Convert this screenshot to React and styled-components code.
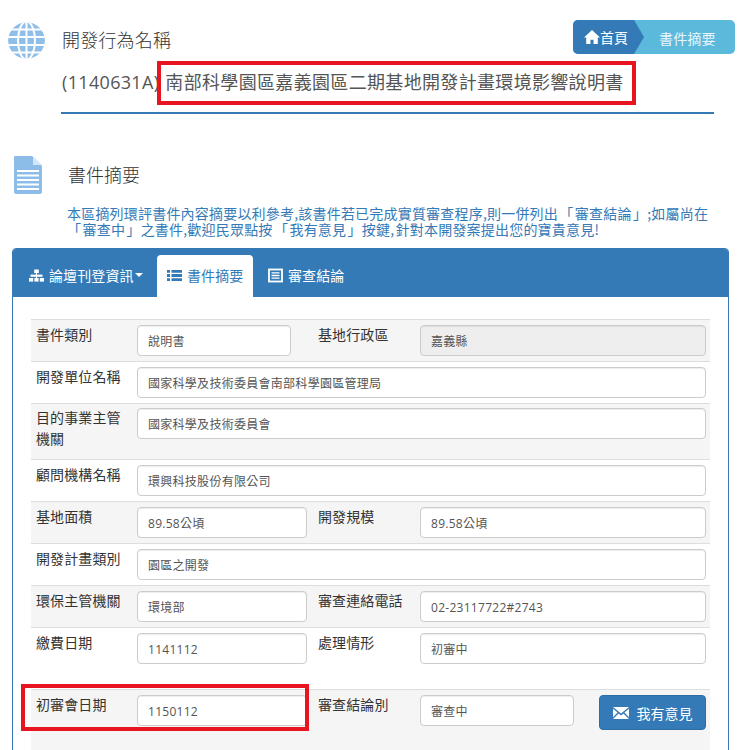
import React from "react";
import styled, { createGlobalStyle } from "styled-components";

const Global = createGlobalStyle`
  html, body { margin: 0; padding: 0; height: 750px; overflow: hidden; background: #fff; }
  body { font-family: "Open Sans", "Noto Sans CJK TC", sans-serif; color: #333; }
`;
const Page = styled.div`
  position: relative;
  width: 740px;
  height: 750px;
  overflow: hidden;
`;
const Header = styled.header`
  display: flex;
  padding: 20px 5px 0 8px;
  height: 134px;
  box-sizing: border-box;
`;
const HeaderIcon = styled.svg`
  width: 37px;
  height: 37px;
  margin-top: 2px;
  flex: none;
`;
const TitleBlock = styled.div`
  margin-left: 16px;
  padding-left: 1px;
  width: 652px;
  height: 92px;
  border-bottom: 2px solid #337ab7;
  flex: none;
`;
const TitleLine = styled.div`
  font-size: 18px;
  line-height: 24px;
  letter-spacing: 0.2px;
  padding-top: 7px;
  color: #333;
  font-family: "Noto Sans CJK TC", sans-serif;
  font-weight: 300;
`;
const SubTitle = styled.div`
  font-size: 18px;
  line-height: 24px;
  margin-top: 19px;
  color: #555;
  letter-spacing: 0.33px;
  white-space: nowrap;
  font-family: "Open Sans", "Noto Sans CJK TC", sans-serif;
`;
const SubTitleName = styled.span`
  margin-left: 1px;
`;
const Crumbs = styled.nav`
  position: absolute;
  left: 573px;
  top: 20px;
  width: 162px;
  height: 34px;
  display: flex;
  border-radius: 5px;
  overflow: hidden;
  background: #5bb9dc;
  color: #fff;
  font-size: 14px;
  line-height: 36px;
  font-family: "Noto Sans CJK TC", sans-serif;
`;
const CrumbHome = styled.div`
  position: relative;
  width: 61px;
  background: #337ab7;
  display: flex;
  align-items: center;
  padding-left: 11px;
  box-sizing: border-box;
  &::after {
    content: "";
    position: absolute;
    left: 61px;
    top: 0;
    border-left: 10px solid #337ab7;
    border-top: 17px solid transparent;
    border-bottom: 17px solid transparent;
  }
`;
const CrumbCurrent = styled.div`
  flex: 1;
  padding-left: 25px;
  letter-spacing: 0.2px;
  color: #e8f6fb;
`;
const Section = styled.section`
  display: flex;
  padding: 22px 0 0 14px;
  height: 72px;
  box-sizing: border-box;
`;
const DocIcon = styled.svg`
  width: 28px;
  height: 38px;
  flex: none;
`;
const SectionTitle = styled.h2`
  margin: 5px 0 0 26px;
  font-size: 18px;
  font-weight: 300;
  line-height: 26px;
  color: #333;
  font-family: "Noto Sans CJK TC", sans-serif;
`;
const Description = styled.p`
  margin: -1px 0 0 67px;
  font-size: 14px;
  line-height: 16px;
  width: 650px;
  color: #337ab7;
  letter-spacing: 0.2px;
  word-spacing: -2px;
  font-family: "Noto Sans CJK TC", sans-serif;
  white-space: nowrap;
`;
const Panel = styled.div`
  margin: 11px 0 0 12px;
  width: 717px;
  height: 520px;
  border: 1px solid #337ab7;
  border-radius: 4px 4px 0 0;
  box-sizing: border-box;
  overflow: hidden;
`;
const TabBar = styled.div`
  background: #337ab7;
  height: 48px;
  display: flex;
  align-items: flex-end;
  padding-left: 5px;
`;
const Tab = styled.div`
  height: 42px;
  width: ${(p) => p.$w}px;
  display: flex;
  align-items: center;
  gap: 5px;
  padding: 0 0 2px ${(p) => p.$pl}px;
  box-sizing: border-box;
  font-size: 14px;
  color: ${(p) => (p.$active ? "#337ab7" : "#fff")};
  background: ${(p) => (p.$active ? "#fff" : "transparent")};
  border-radius: 4px 4px 0 0;
  font-family: "Noto Sans CJK TC", sans-serif;
  letter-spacing: 0.1px;
  white-space: nowrap;
`;
const Caret = styled.span`
  width: 0;
  height: 0;
  margin-left: -4px;
  border-left: 4px solid transparent;
  border-right: 4px solid transparent;
  border-top: 4px solid #fff;
`;
const TabIcon = styled.svg`
  width: 15px;
  height: 15px;
  flex: none;
`;
const FormTable = styled.div`
  margin: 22px 0 0 18px;
  width: 679px;
`;
const Row = styled.div`
  position: relative;
  display: flex;
  align-items: flex-start;
  box-sizing: border-box;
  height: ${(p) => p.$h}px;
  padding: ${(p) => p.$top ?? 5}px 4px 0 5px;
  border-top: 1px solid #ddd;
  background: ${(p) => (p.$gray ? "#f5f5f5" : "#fff")};
`;
const Label = styled.div`
  width: ${(p) => p.$w}px;
  margin-top: -1px;
  padding-right: 10px;
  box-sizing: border-box;
  flex: none;
  font-size: 14px;
  line-height: 21px;
  letter-spacing: 0.1px;
  color: #333;
  font-family: "Noto Sans CJK TC", sans-serif;
`;
const Field = styled.div`
  width: ${(p) => p.$w}px;
  height: 31px;
  box-sizing: border-box;
  flex: none;
  margin-right: ${(p) => p.$mr ?? 0}px;
  border: 1px solid #ccc;
  border-radius: 4px;
  padding: 0 10px;
  font-size: 12px;
  line-height: 31px;
  letter-spacing: 0.28px;
  color: #555;
  background: ${(p) => (p.$disabled ? "#eee" : "#fff")};
  box-shadow: inset 0 1px 1px rgba(0, 0, 0, 0.075);
  white-space: nowrap;
  overflow: hidden;
`;
const Action = styled.button`
  margin-left: 25px;
  width: 107px;
  height: 35px;
  border: 1px solid #2e6da4;
  border-radius: 4px;
  background: #337ab7;
  color: #fff;
  font-size: 14px;
  font-family: "Noto Sans CJK TC", sans-serif;
  display: flex;
  align-items: center;
  justify-content: center;
  gap: 8px;
  padding: 0;
`;
const Highlight = styled.div`
  position: absolute;
  box-sizing: border-box;
  border: 4px solid #e8141f;
  left: ${(p) => p.$x}px;
  top: ${(p) => p.$y}px;
  width: ${(p) => p.$w}px;
  height: ${(p) => p.$h}px;
  pointer-events: none;
`;

const Globe = () => (
  <HeaderIcon viewBox="0 0 37 37">
    <defs>
      <clipPath id="g"><circle cx="18.5" cy="18.5" r="18.5" /></clipPath>
    </defs>
    <g clipPath="url(#g)">
      <circle cx="18.5" cy="18.5" r="18.5" fill="#8fbfe8" />
      <g stroke="#fff" strokeWidth="2" fill="none">
        <path d="M0 7.5H37M0 15H37M0 23H37M0 30.5H37" />
        <path d="M18.5 0V37" />
        <ellipse cx="18.5" cy="18.5" rx="8.5" ry="19" />
      </g>
    </g>
  </HeaderIcon>
);
const Doc = () => (
  <DocIcon viewBox="0 0 28 38">
    <path d="M1 0H18L28 10V36a2 2 0 0 1-2 2H2a2 2 0 0 1-2-2V1a1 1 0 0 1 1-1Z" fill="#8bbde8" />
    <path d="M19 0L28 9H19Z" fill="#d5e6f6" />
    <path d="M3 15H25M3 19.5H25M3 24H25M3 28.5H25M3 33H25" stroke="#fff" strokeWidth="1.8" />
  </DocIcon>
);
const Home = () => (
  <svg width="16" height="14" viewBox="0 0 16 14" style={{ flex: "none" }}>
    <path d="M8 0L16 7.4H13.8V14H9.5V9.8H6.5V14H2.2V7.4H0Z" fill="#fff" />
  </svg>
);
const Sitemap = () => (
  <TabIcon viewBox="0 0 15 15">
    <g fill="#fff">
      <rect x="5.2" y="1.5" width="4.6" height="3.6" />
      <rect x="0" y="10" width="4.2" height="3.6" />
      <rect x="5.4" y="10" width="4.2" height="3.6" />
      <rect x="10.8" y="10" width="4.2" height="3.6" />
      <rect x="1.5" y="6.6" width="12" height="2.2" />
      <rect x="7" y="5" width="1" height="5" />
    </g>
  </TabIcon>
);
const ListIcon = () => (
  <TabIcon viewBox="0 0 15 15">
    <path d="M0 2h3v2.8H0zM4.5 2H15v2.8H4.5zM0 6.1h3v2.8H0zM4.5 6.1H15v2.8H4.5zM0 10.2h3V13H0zM4.5 10.2H15V13H4.5z" fill="#337ab7" />
  </TabIcon>
);
const ListAlt = () => (
  <TabIcon viewBox="0 0 15 15">
    <rect x="1" y="1.5" width="13" height="12" fill="none" stroke="#fff" strokeWidth="1.8" />
    <path d="M3.5 4.8h8M3.5 7.5h8M3.5 10.2h8" stroke="#fff" strokeWidth="1.3" />
  </TabIcon>
);
const Mail = () => (
  <svg width="16" height="12" viewBox="0 0 16 12">
    <path d="M0 0H16L8 6.6ZM0 1.8L4.6 5.6 0 10.2ZM16 1.8L11.4 5.6 16 10.2ZM5.6 6.4L8 8.4 10.4 6.4 16 12H0Z" fill="#fff" />
  </svg>
);

export default function App() {
  return (
    <Page>
      <Global />
      <Header>
        <Globe />
        <TitleBlock>
          <TitleLine>開發行為名稱</TitleLine>
          <SubTitle>(1140631A) <SubTitleName>南部科學園區嘉義園區二期基地開發計畫環境影響說明書</SubTitleName></SubTitle>
        </TitleBlock>
      </Header>
      <Crumbs>
        <CrumbHome><Home />首頁</CrumbHome>
        <CrumbCurrent>書件摘要</CrumbCurrent>
      </Crumbs>
      <Highlight $x={157} $y={61} $w={479} $h={44} />
      <Section>
        <Doc />
        <SectionTitle>書件摘要</SectionTitle>
      </Section>
      <Description>
        本區摘列環評書件內容摘要以利參考,該書件若已完成實質審查程序,則一併列出 「 審查結論 」;如屬尚在
        <br />
        「 審查中 」之書件,歡迎民眾點按 「 我有意見 」按鍵, 針對本開發案提出您的寶貴意見!
      </Description>
      <Panel>
        <TabBar>
          <Tab $w={139} $pl={11}><Sitemap />論壇刊登資訊<Caret /></Tab>
          <Tab $active $w={96} $pl={10}><ListIcon />書件摘要</Tab>
          <Tab $w={110} $pl={15}><ListAlt />審查結論</Tab>
        </TabBar>
        <FormTable>
          <Row $gray $h={42}>
            <Label $w={101}>書件類別</Label>
            <Field $w={154} $mr={27}>說明書</Field>
            <Label $w={102}>基地行政區</Label>
            <Field $w={286} $disabled>嘉義縣</Field>
          </Row>
          <Row $h={42}>
            <Label $w={101}>開發單位名稱</Label>
            <Field $w={569}>國家科學及技術委員會南部科學園區管理局</Field>
          </Row>
          <Row $gray $h={56} $top={4}>
            <Label $w={101}>目的事業主管機關</Label>
            <Field $w={569}>國家科學及技術委員會</Field>
          </Row>
          <Row $h={42}>
            <Label $w={101}>顧問機構名稱</Label>
            <Field $w={569}>環興科技股份有限公司</Field>
          </Row>
          <Row $gray $h={42}>
            <Label $w={101}>基地面積</Label>
            <Field $w={170} $mr={11}>89.58公頃</Field>
            <Label $w={102}>開發規模</Label>
            <Field $w={286}>89.58公頃</Field>
          </Row>
          <Row $h={42}>
            <Label $w={101}>開發計畫類別</Label>
            <Field $w={569}>園區之開發</Field>
          </Row>
          <Row $gray $h={42}>
            <Label $w={101}>環保主管機關</Label>
            <Field $w={170} $mr={11}>環境部</Field>
            <Label $w={102}>審查連絡電話</Label>
            <Field $w={286}>02-23117722#2743</Field>
          </Row>
          <Row $h={62}>
            <Label $w={101}>繳費日期</Label>
            <Field $w={170} $mr={11}>1141112</Field>
            <Label $w={102}>處理情形</Label>
            <Field $w={286}>初審中</Field>
          </Row>
          <Row $gray $h={80}>
            <Label $w={101}>初審會日期</Label>
            <Field $w={170} $mr={11}>1150112</Field>
            <Label $w={102}>審查結論別</Label>
            <Field $w={154}>審查中</Field>
            <Action><Mail />我有意見</Action>
          </Row>
        </FormTable>
      </Panel>
      <Highlight $x={21} $y={684} $w={288} $h={47} />
    </Page>
  );
}
